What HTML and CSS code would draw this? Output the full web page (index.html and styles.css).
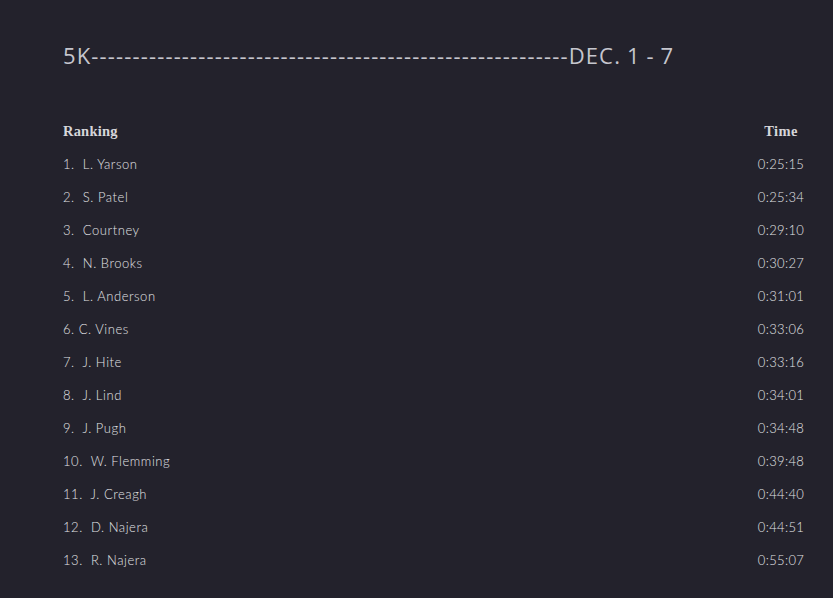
FILE: index.html
```html
<!DOCTYPE html>
<html>
<head>
<meta charset="utf-8">
<link rel="stylesheet" href="styles.css">
</head>
<body>
<div class="page">
  <h1 class="title">5K----------------------------------------------------------DEC. 1 - 7</h1>
  <div class="board">
    <div class="row head"><span class="name">Ranking</span><span class="time">Time</span></div>
    <div class="row"><span class="name">1.&nbsp; L. Yarson</span><span class="time">0:25:15</span></div>
    <div class="row"><span class="name">2.&nbsp; S. Patel</span><span class="time">0:25:34</span></div>
    <div class="row"><span class="name">3.&nbsp; Courtney</span><span class="time">0:29:10</span></div>
    <div class="row"><span class="name">4.&nbsp; N. Brooks</span><span class="time">0:30:27</span></div>
    <div class="row"><span class="name">5.&nbsp; L. Anderson</span><span class="time">0:31:01</span></div>
    <div class="row"><span class="name">6. C. Vines</span><span class="time">0:33:06</span></div>
    <div class="row"><span class="name">7.&nbsp; J. Hite</span><span class="time">0:33:16</span></div>
    <div class="row"><span class="name">8.&nbsp; J. Lind</span><span class="time">0:34:01</span></div>
    <div class="row"><span class="name">9.&nbsp; J. Pugh</span><span class="time">0:34:48</span></div>
    <div class="row"><span class="name">10.&nbsp; W. Flemming</span><span class="time">0:39:48</span></div>
    <div class="row"><span class="name">11.&nbsp; J. Creagh</span><span class="time">0:44:40</span></div>
    <div class="row"><span class="name">12.&nbsp; D. Najera</span><span class="time">0:44:51</span></div>
    <div class="row"><span class="name">13.&nbsp; R. Najera</span><span class="time">0:55:07</span></div>
  </div>
</div>
</body>
</html>
```
FILE: styles.css
```css
html, body {
  margin: 0;
  padding: 0;
  background: #23222c;
}
.page {
  padding: 40px 17px 0 63px;
  height: 558px;
  overflow: hidden;
}
.title {
  margin: 0;
  font-family: "Open Sans", "Noto Sans", sans-serif;
  font-weight: 400;
  font-size: 22px;
  line-height: 30px;
  letter-spacing: 1.15px;
  word-spacing: -1px;
  color: #c6c6ce;
  white-space: nowrap;
}
.board {
  margin-top: 45px;
}
.row {
  display: grid;
  grid-template-columns: 1fr 70px;
  height: 33px;
  line-height: 33px;
  font-family: "Lato", "Liberation Sans", sans-serif;
  font-weight: 300;
  font-size: 13px;
  letter-spacing: 0.55px;
  color: #e2e2e6;
}
.time {
  text-align: center;
  letter-spacing: 0.35px;
}
.row.head {
  font-family: "Liberation Serif", serif;
  font-weight: 700;
  font-size: 14.5px;
  letter-spacing: 0.2px;
  color: #d6d6da;
}
```
